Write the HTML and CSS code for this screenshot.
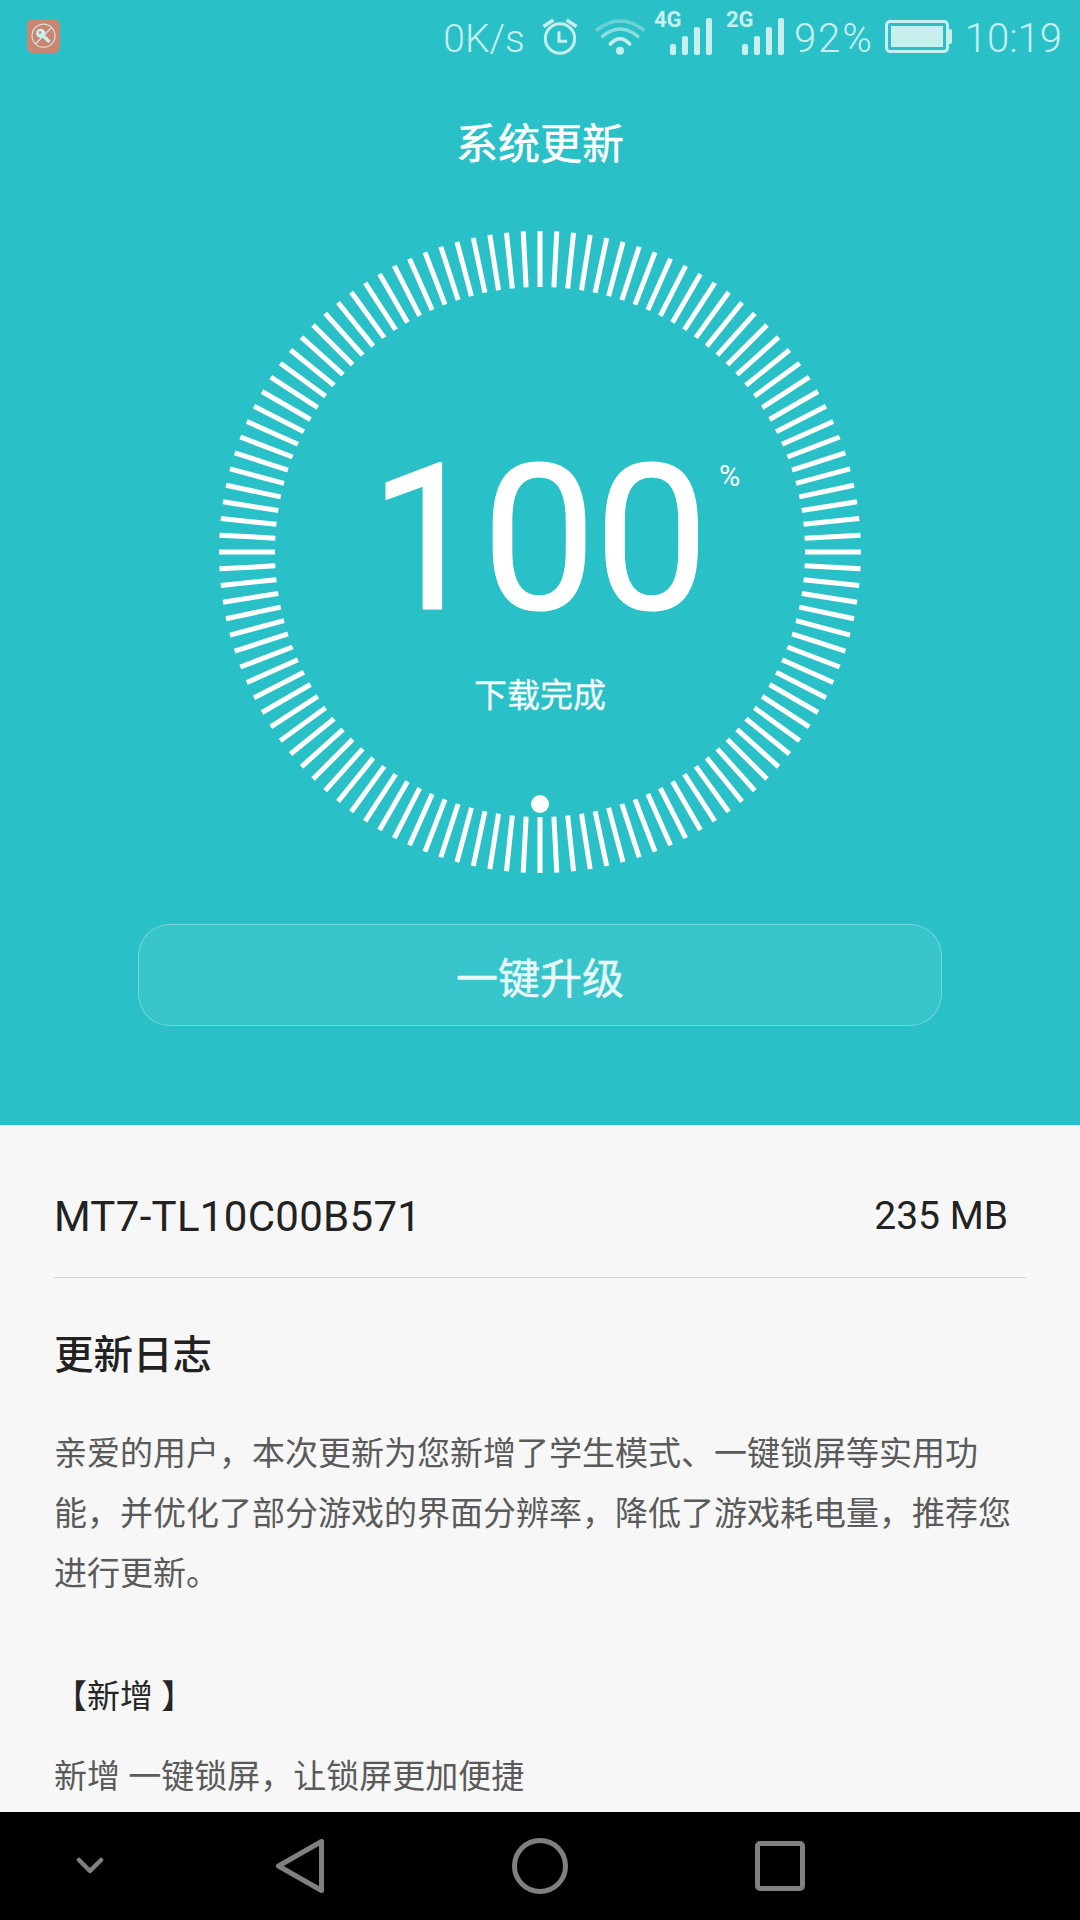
FILE: index.html
```html
<!DOCTYPE html>
<html lang="zh-CN">
<head>
<meta charset="utf-8">
<title>系统更新</title>
<link rel="stylesheet" href="styles.css">
</head>
<body>
<div class="phone">
  <section class="hero">
    <header class="status">
      <div class="app-badge">
        <svg viewBox="0 0 33 34" width="33" height="34">
          <rect width="33" height="34" rx="6" fill="#cb8573"/>
          <circle cx="16.5" cy="16.7" r="11.5" fill="none" stroke="#d3e8e2" stroke-width="1.2"/>
          <path d="M8.5 25 24.5 8.5" stroke="#d3e8e2" stroke-width="1.2"/>
          <path d="M15 15.5 22.5 23" stroke="#c9efee" stroke-width="3.2"/>
          <circle cx="13.7" cy="14.3" r="4.6" fill="#c9efee"/>
          <circle cx="13" cy="13.6" r="1.3" fill="#cb8573"/>
        </svg>
      </div>
      <div class="status-right">
        <span class="st-text st-speed">0K/s</span>
        <svg class="st-alarm" viewBox="0 0 36 37" width="36" height="37">
          <circle cx="18" cy="20.5" r="14.7" fill="none" stroke="#c8efee" stroke-width="3"/>
          <path d="M17 13.3V23.3H25" fill="none" stroke="#c8efee" stroke-width="3"/>
          <path d="M1.5 8.5 11.5 2M34.5 8.5 24.5 2" stroke="#c8efee" stroke-width="3.5"/>
        </svg>
        <svg class="st-wifi" viewBox="0 0 50 37" width="50" height="37">
          <circle cx="25" cy="32.7" r="4" fill="#c8efee"/>
          <path d="M15.3 26Q25 15.4 34.7 26" fill="none" stroke="#c8efee" stroke-width="3.6" stroke-linecap="round"/>
          <path d="M7.7 18.3Q25 3.7 42.7 18.3" fill="none" stroke="#8adcdc" stroke-width="3.6" stroke-linecap="round"/>
          <path d="M2 11.7Q25 -5.7 48.5 11.7" fill="none" stroke="#6ad2d4" stroke-width="3.6" stroke-linecap="round"/>
        </svg>
        <div class="st-signal st-signal-first">
          <span class="st-net">4G</span>
          <div class="bars"><i class="b1"></i><i class="b2"></i><i class="b3"></i><i class="b4"></i></div>
        </div>
        <div class="st-signal">
          <span class="st-net">2G</span>
          <div class="bars"><i class="b1"></i><i class="b2"></i><i class="b3"></i><i class="b4"></i></div>
        </div>
        <span class="st-text st-batt-text">92%</span>
        <div class="battery"><div class="battery-fill"></div></div>
        <span class="st-text st-time">10:19</span>
      </div>
    </header>

    <h1 class="title">系统更新</h1>

    <div class="dial">
      <svg class="ticks" viewBox="-321 -321 642 642" width="642" height="642">
        <defs><path id="t" d="M0-321V-265M0 265V321" stroke="#fff" stroke-width="5"/></defs>
        <use href="#t"/><use href="#t" transform="rotate(3)"/><use href="#t" transform="rotate(6)"/><use href="#t" transform="rotate(9)"/><use href="#t" transform="rotate(12)"/><use href="#t" transform="rotate(15)"/><use href="#t" transform="rotate(18)"/><use href="#t" transform="rotate(21)"/><use href="#t" transform="rotate(24)"/><use href="#t" transform="rotate(27)"/>
        <use href="#t" transform="rotate(30)"/><use href="#t" transform="rotate(33)"/><use href="#t" transform="rotate(36)"/><use href="#t" transform="rotate(39)"/><use href="#t" transform="rotate(42)"/><use href="#t" transform="rotate(45)"/><use href="#t" transform="rotate(48)"/><use href="#t" transform="rotate(51)"/><use href="#t" transform="rotate(54)"/><use href="#t" transform="rotate(57)"/>
        <use href="#t" transform="rotate(60)"/><use href="#t" transform="rotate(63)"/><use href="#t" transform="rotate(66)"/><use href="#t" transform="rotate(69)"/><use href="#t" transform="rotate(72)"/><use href="#t" transform="rotate(75)"/><use href="#t" transform="rotate(78)"/><use href="#t" transform="rotate(81)"/><use href="#t" transform="rotate(84)"/><use href="#t" transform="rotate(87)"/>
        <use href="#t" transform="rotate(90)"/><use href="#t" transform="rotate(93)"/><use href="#t" transform="rotate(96)"/><use href="#t" transform="rotate(99)"/><use href="#t" transform="rotate(102)"/><use href="#t" transform="rotate(105)"/><use href="#t" transform="rotate(108)"/><use href="#t" transform="rotate(111)"/><use href="#t" transform="rotate(114)"/><use href="#t" transform="rotate(117)"/>
        <use href="#t" transform="rotate(120)"/><use href="#t" transform="rotate(123)"/><use href="#t" transform="rotate(126)"/><use href="#t" transform="rotate(129)"/><use href="#t" transform="rotate(132)"/><use href="#t" transform="rotate(135)"/><use href="#t" transform="rotate(138)"/><use href="#t" transform="rotate(141)"/><use href="#t" transform="rotate(144)"/><use href="#t" transform="rotate(147)"/>
        <use href="#t" transform="rotate(150)"/><use href="#t" transform="rotate(153)"/><use href="#t" transform="rotate(156)"/><use href="#t" transform="rotate(159)"/><use href="#t" transform="rotate(162)"/><use href="#t" transform="rotate(165)"/><use href="#t" transform="rotate(168)"/><use href="#t" transform="rotate(171)"/><use href="#t" transform="rotate(174)"/><use href="#t" transform="rotate(177)"/>
        <circle cx="0" cy="252" r="9" fill="#fff"/>
      </svg>
      <div class="readout">
        <div class="percent">100<span class="percent-sign">%</span></div>
        <div class="state">下载完成</div>
      </div>
    </div>

    <button class="upgrade">一键升级</button>
  </section>

  <main class="details">
    <div class="pkg">
      <span class="pkg-name">MT7-TL10C00B571</span>
      <span class="pkg-size">235 MB</span>
    </div>
    <h2 class="log-title">更新日志</h2>
    <p class="log-text">亲爱的用户，本次更新为您新增了学生模式、一键锁屏等实用功能，并优化了部分游戏的界面分辨率，降低了游戏耗电量，推荐您进行更新。</p>
    <h3 class="log-sub">【新增 】</h3>
    <p class="log-item">新增 一键锁屏，让锁屏更加便捷</p>
  </main>

  <nav class="navbar">
    <svg class="nav-hide" viewBox="0 0 28 18" width="28" height="18"><path d="M3 3 14 14 25 3" fill="none" stroke="#808080" stroke-width="4.5" stroke-linecap="round" stroke-linejoin="round"/></svg>
    <svg class="nav-back" viewBox="0 0 48 54" width="48" height="54"><path d="M45.5 2.5V51.5L2.5 27Z" fill="none" stroke="#808080" stroke-width="5" stroke-linejoin="round"/></svg>
    <svg class="nav-home" viewBox="0 0 56 56" width="56" height="56"><circle cx="28" cy="28" r="25.5" fill="none" stroke="#808080" stroke-width="5"/></svg>
    <svg class="nav-recent" viewBox="0 0 50 50" width="50" height="50"><rect x="2.5" y="2.5" width="45" height="45" rx="2.5" fill="none" stroke="#808080" stroke-width="5"/></svg>
  </nav>
</div>
</body>
</html>
```

FILE: styles.css
```css
* { box-sizing: border-box; }

html, body {
  margin: 0;
  padding: 0;
}

body {
  width: 1080px;
  height: 1920px;
  overflow: hidden;
  font-family: Roboto, "Noto Sans CJK SC", sans-serif;
}

.phone {
  width: 1080px;
  height: 1920px;
  display: flex;
  flex-direction: column;
  background: #f7f7f7;
}

/* Teal upper panel */
.hero {
  height: 1125px;
  flex: none;
  background: #29c0c7;
  display: flex;
  flex-direction: column;
  align-items: center;
}

.status {
  width: 100%;
  height: 72px;
  display: flex;
  align-items: center;
  justify-content: space-between;
  padding: 0 18px 0 27px;
  color: #c8efee;
}

.app-badge {
  height: 34px;
  display: flex;
}

.status-right {
  display: flex;
  align-items: center;
}

.st-text {
  font-size: 40px;
  font-weight: 300;
  line-height: 66px;
  padding-top: 6px;
}

.st-speed { font-size: 39px; margin-right: 17px; }
.st-alarm { margin-right: 17px; }
.st-wifi { margin-right: 9px; }
.st-batt-text { letter-spacing: 2px; margin-right: 11px; }
.st-time { margin-left: 16px; }

.st-signal {
  width: 58px;
  height: 44px;
  position: relative;
  margin-right: 10px;
}

.st-signal-first { margin-right: 14px; }

.st-net {
  position: absolute;
  left: 0;
  top: -5px;
  font-size: 22px;
  font-weight: 700;
  line-height: 22px;
}

.bars {
  position: absolute;
  right: 0;
  bottom: 3px;
  display: flex;
  align-items: flex-end;
  gap: 6px;
}

.bars i {
  width: 6px;
  border-radius: 2px;
  background: #c8efee;
  display: block;
}

.b1 { height: 11px; }
.b2 { height: 19px; }
.b3 { height: 28px; }
.b4 { height: 37px; }

.battery {
  width: 64px;
  height: 33px;
  border: 3px solid #c8efee;
  border-radius: 5px;
  padding: 3px;
  position: relative;
}

.battery::after {
  content: "";
  position: absolute;
  right: -6px;
  top: 6px;
  width: 3px;
  height: 15px;
  border-radius: 0 2px 2px 0;
  background: #c8efee;
}

.battery-fill {
  height: 100%;
  background: #c8efee;
}

.title {
  margin: 44px 0 0;
  font-size: 42px;
  line-height: 58px;
  font-weight: 400;
  color: #fff;
  -webkit-text-stroke: 0.5px #fff;
}

/* Progress dial */
.dial {
  width: 642px;
  height: 642px;
  margin-top: 57px;
  position: relative;
  flex: none;
}

.ticks {
  display: block;
}

.readout {
  position: absolute;
  inset: 0;
  display: flex;
  flex-direction: column;
  align-items: center;
}

.percent {
  margin-top: 209px;
  padding-right: 4px;
  font-size: 204px;
  letter-spacing: -2px;
  line-height: 200px;
  color: #fff;
  -webkit-text-stroke: 1px #fff;
  position: relative;
}

.percent-sign {
  position: absolute;
  left: 100%;
  top: 16px;
  margin-left: 8px;
  font-size: 29px;
  letter-spacing: 0;
  line-height: 40px;
  -webkit-text-stroke: 0;
}

.state {
  margin-top: 33px;
  font-size: 33px;
  line-height: 46px;
  color: #f4fcfc;
  -webkit-text-stroke: 0.3px #f4fcfc;
}

.upgrade {
  margin-top: 51px;
  width: 804px;
  height: 102px;
  background: rgba(255, 255, 255, 0.07);
  border: 1.5px solid rgba(255, 255, 255, 0.3);
  border-radius: 32px;
  color: #e6f8f8;
  font-family: inherit;
  font-size: 42px;
  font-weight: 400;
  -webkit-text-stroke: 0.5px #e6f8f8;
  padding: 0;
}

/* Release notes */
.details {
  flex: 1;
  min-height: 0;
  overflow: hidden;
  padding: 0 54px;
}

.pkg {
  height: 153px;
  padding: 30px 18px 0 0;
  display: flex;
  justify-content: space-between;
  align-items: center;
  border-bottom: 1px solid #d5d5d5;
  color: #222;
}

.pkg-name { font-size: 42px; letter-spacing: 0.3px; }
.pkg-size { font-size: 39px; }

.log-title {
  margin: 50px 0 0;
  font-size: 39.5px;
  line-height: 56px;
  font-weight: 500;
  color: #212121;
}

.log-text {
  margin: 40px 0 0;
  font-size: 33px;
  line-height: 60px;
  color: #5a5a5a;
}

.log-sub {
  margin: 69px 0 0;
  font-size: 33px;
  line-height: 48px;
  font-weight: 400;
  color: #262626;
}

.log-item {
  margin: 32px 0 0;
  font-size: 33px;
  line-height: 48px;
  color: #5a5a5a;
}

/* System navigation bar */
.navbar {
  height: 108px;
  flex: none;
  background: #000;
  position: relative;
}

.navbar svg {
  position: absolute;
}

.nav-hide { left: 76px; top: 45px; }
.nav-back { left: 276px; top: 27px; }
.nav-home { left: 512px; top: 26px; }
.nav-recent { left: 755px; top: 29px; }
```
